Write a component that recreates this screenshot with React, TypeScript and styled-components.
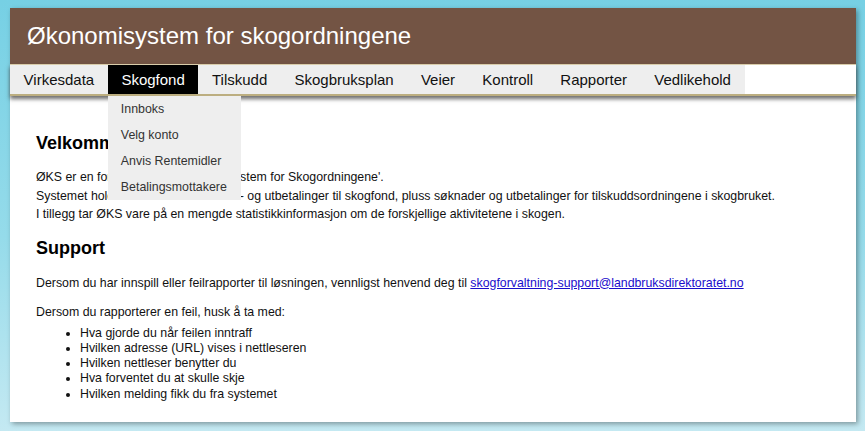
import React from "react";
import styled, { createGlobalStyle } from "styled-components";

const Global = createGlobalStyle`
  html, body { margin: 0; padding: 0; }
  body {
    width: 865px;
    height: 431px;
    overflow: hidden;
    font-family: "Liberation Sans", Arial, sans-serif;
    background: linear-gradient(to bottom, #76d0e4 0%, #95dbea 55%, #c4e9f2 100%);
  }
`;

const Page = styled.div`
  box-sizing: border-box;
  height: 431px;
  padding: 8px 9px 9px 10px;
  display: flex;
`;

const Panel = styled.div`
  flex: 1;
  background: #ffffff;
  box-shadow: 2px 2px 5px rgba(0, 0, 0, 0.35);
  display: flex;
  flex-direction: column;
`;

const Header = styled.header`
  height: 56px;
  background: #735444;
  display: flex;
  align-items: center;
  padding-left: 17px;
  box-sizing: border-box;
`;

const Title = styled.h1`
  margin: 0;
  font-size: 24px;
  font-weight: normal;
  color: #ffffff;
  line-height: 28px;
`;

const NavWrap = styled.nav`
  position: relative;
  border-top: 1px solid #d9ccaa;
  border-bottom: 2px solid #bcae80;
  box-shadow: 0 3px 4px rgba(60, 60, 60, 0.75);
  background: #ffffff;
  z-index: 2;
`;

const NavList = styled.ul`
  list-style: none;
  margin: 0;
  padding: 0;
  display: flex;
`;

const NavItem = styled.li<{ $active?: boolean }>`
  position: relative;
  height: 29px;
  padding: 0 13.6px;
  display: flex;
  align-items: center;
  font-size: 15px;
  color: ${(p) => (p.$active ? "#ffffff" : "#111111")};
  background: ${(p) => (p.$active ? "#000000" : "#eeeeee")};
`;

const Dropdown = styled.ul`
  position: absolute;
  top: 31px;
  left: 0;
  width: 133px;
  margin: 0;
  padding: 0;
  list-style: none;
  background: #eeeeee;
  z-index: 5;
`;

const DropItem = styled.li`
  height: 26px;
  line-height: 26px;
  padding-left: 13px;
  font-size: 12.4px;
  color: #333333;
  white-space: nowrap;
`;

const Content = styled.main`
  padding: 0 26px;
  color: #111111;
  font-size: 12.35px;
`;

const Heading = styled.h2<{ $top: number }>`
  margin: ${(p) => p.$top}px 0 0;
  font-size: 18px;
  line-height: 21px;
  font-weight: bold;
  color: #000000;
`;

const Para = styled.p<{ $top: number }>`
  margin: ${(p) => p.$top}px 0 0;
  line-height: 18.5px;
`;

const Link = styled.a`
  color: #1a0dcc;
  text-decoration: underline;
`;

const Bullets = styled.ul`
  margin: 4px 0 0;
  padding-left: 44px;
  line-height: 15.25px;
`;

const nav = [
  "Virkesdata",
  "Skogfond",
  "Tilskudd",
  "Skogbruksplan",
  "Veier",
  "Kontroll",
  "Rapporter",
  "Vedlikehold",
];

const sub = ["Innboks", "Velg konto", "Anvis Rentemidler", "Betalingsmottakere"];

export default function App() {
  return (
    <>
      <Global />
      <Page>
        <Panel>
          <Header>
            <Title>Økonomisystem for skogordningene</Title>
          </Header>
          <NavWrap>
            <NavList>
              {nav.map((n) => (
                <NavItem key={n} $active={n === "Skogfond"}>
                  {n}
                  {n === "Skogfond" && (
                    <Dropdown>
                      {sub.map((s) => (
                        <DropItem key={s}>{s}</DropItem>
                      ))}
                    </Dropdown>
                  )}
                </NavItem>
              ))}
            </NavList>
          </NavWrap>
          <Content>
            <Heading $top={37}>Velkommen</Heading>
            <Para $top={14}>
              ØKS er en forkortelse for 'Økonomisystem for Skogordningene'.
              <br />
              Systemet holder bra oversikt over inn- og utbetalinger til skogfond, pluss søknader og utbetalinger for tilskuddsordningene i skogbruket.
              <br />
              I tillegg tar ØKS vare på en mengde statistikkinformasjon om de forskjellige aktivitetene i skogen.
            </Para>
            <Heading $top={14}>Support</Heading>
            <Para $top={15}>
              Dersom du har innspill eller feilrapporter til løsningen, vennligst henvend deg til{" "}
              <Link href="#">skogforvaltning-support@landbruksdirektoratet.no</Link>
            </Para>
            <Para $top={11}>Dersom du rapporterer en feil, husk å ta med:</Para>
            <Bullets>
              <li>Hva gjorde du når feilen inntraff</li>
              <li>Hvilken adresse (URL) vises i nettleseren</li>
              <li>Hvilken nettleser benytter du</li>
              <li>Hva forventet du at skulle skje</li>
              <li>Hvilken melding fikk du fra systemet</li>
            </Bullets>
          </Content>
        </Panel>
      </Page>
    </>
  );
}
